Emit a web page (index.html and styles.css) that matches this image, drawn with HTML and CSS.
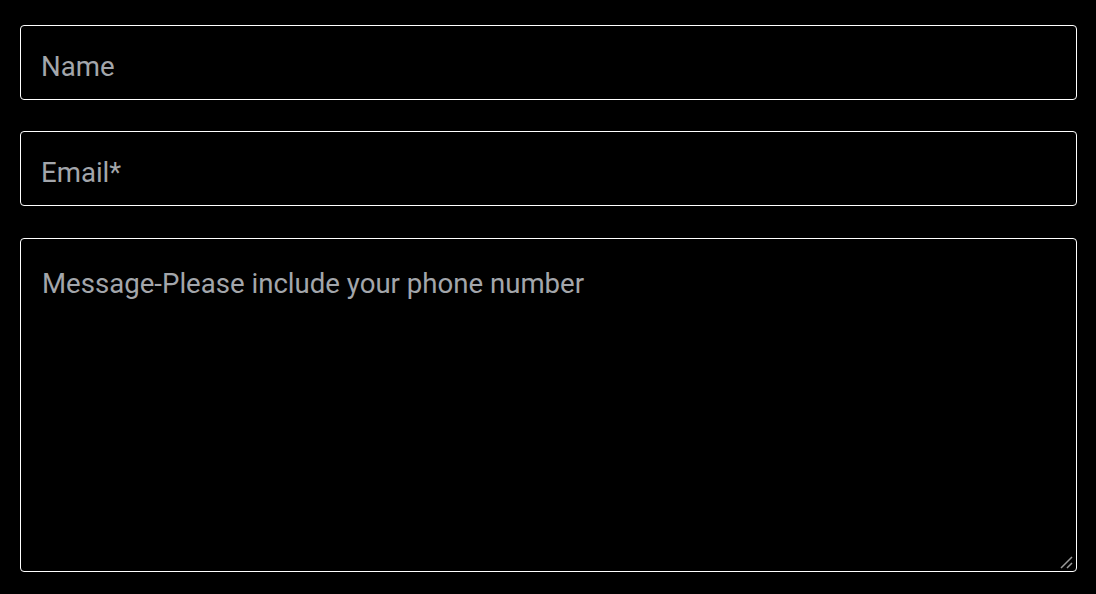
FILE: index.html
```html
<!DOCTYPE html>
<html>
<head>
<meta charset="utf-8">
<link rel="stylesheet" href="styles.css">
</head>
<body>
<form class="form">
  <input class="field" type="text" placeholder="Name">
  <input class="field" type="email" placeholder="Email*">
  <div class="area-wrap">
    <textarea class="field area" placeholder="Message-Please include your phone number"></textarea>
    <svg class="grip" width="14" height="14" viewBox="0 0 14 14" aria-hidden="true">
      <path d="M2 13 L13 2 M8 13 L13 8" stroke="#9a9a9a" stroke-width="1.5" fill="none"/>
    </svg>
  </div>
</form>
</body>
</html>
```

FILE: styles.css
```css
html, body {
  margin: 0;
  background: #000;
}
body {
  padding: 25px 19px 0 20px;
  font-family: Roboto, "Liberation Sans", sans-serif;
}
.form {
  display: flex;
  flex-direction: column;
  gap: 31px;
}
.field {
  box-sizing: border-box;
  width: 100%;
  height: 75px;
  margin: 0;
  padding: 8px 20px 0;
  background: #000;
  color: #ddd;
  border: 1px solid #fff;
  border-radius: 4px;
  font-family: Roboto, "Liberation Sans", sans-serif;
  font-size: 27.6px;
  outline: none;
}
.field::placeholder {
  color: #a3a6ab;
  opacity: 1;
}
.area-wrap {
  position: relative;
  margin-top: 1px;
  display: flex;
}
.area {
  height: 334px;
  padding: 28px 21px;
  resize: none;
  display: block;
}
.grip {
  position: absolute;
  right: 4px;
  bottom: 3px;
  pointer-events: none;
}
```
